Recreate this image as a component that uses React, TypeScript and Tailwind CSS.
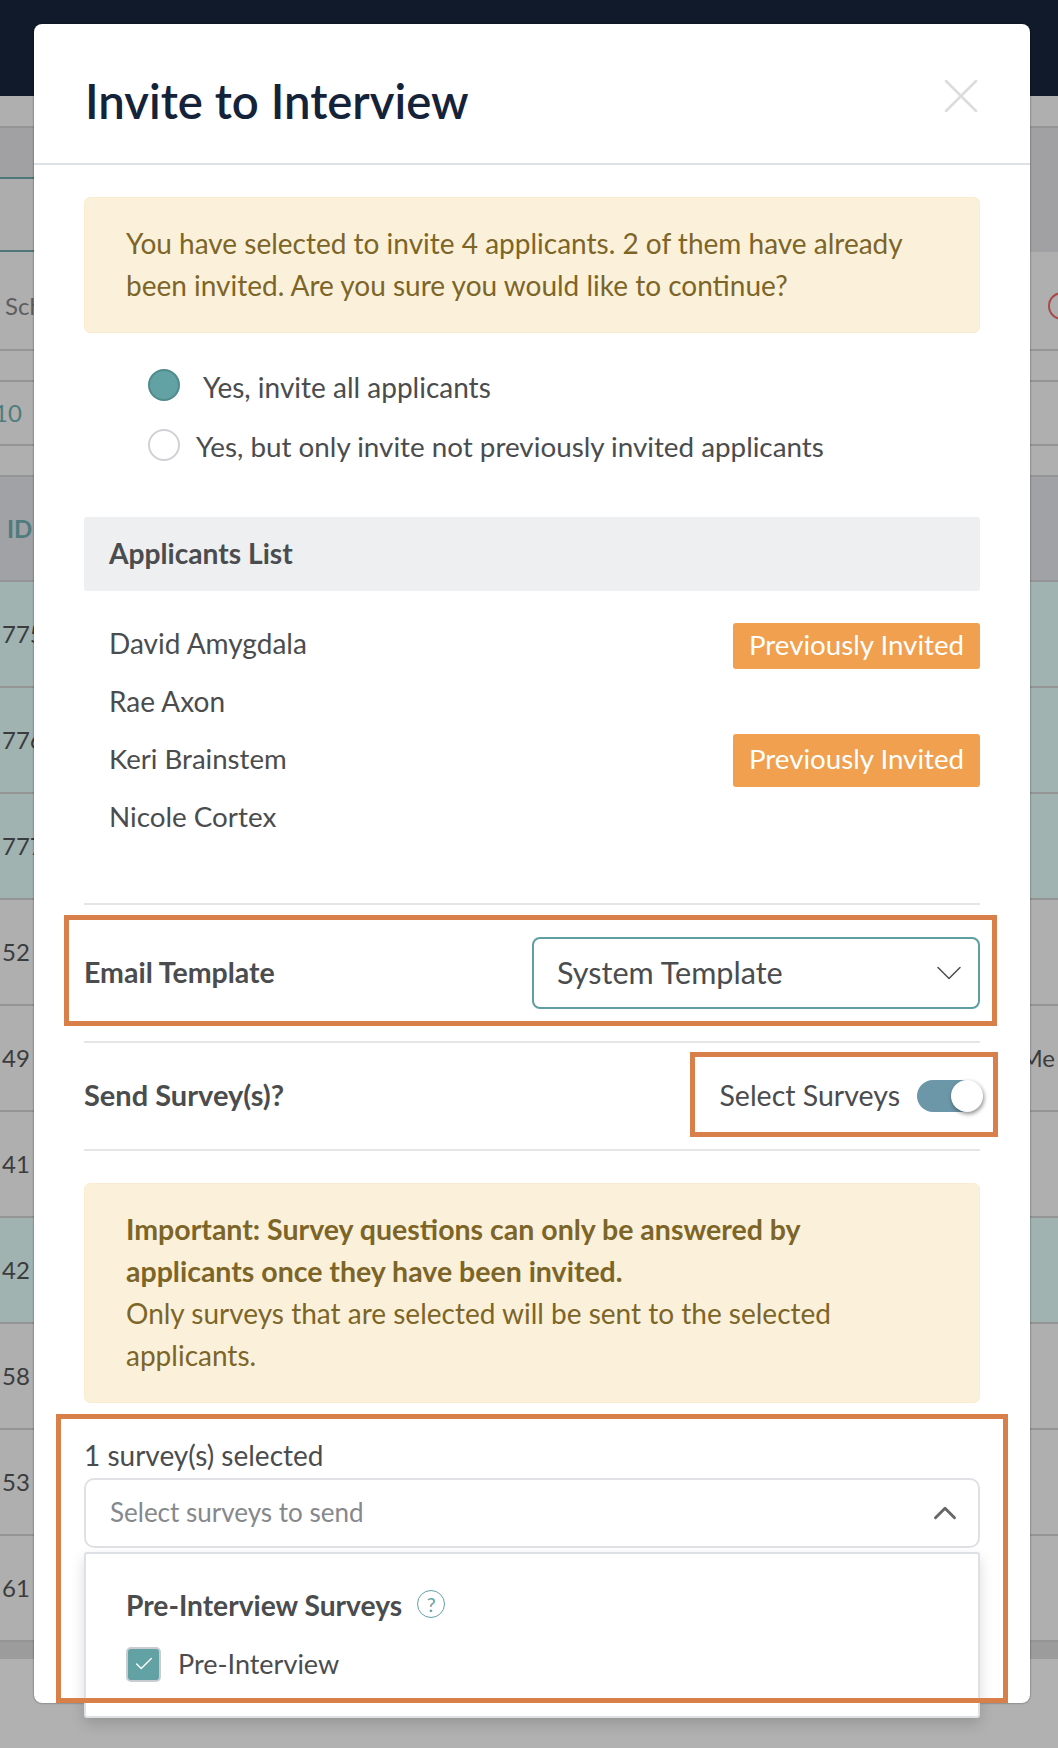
import { X, ChevronDown, ChevronUp, Check } from "lucide-react";

const font = "font-['Lato','Liberation_Sans',sans-serif]";

const rows = [
  { id: "775", teal: true },
  { id: "776", teal: true },
  { id: "777", teal: true },
  { id: "52", teal: false },
  { id: "49", teal: false, right: "Me" },
  { id: "41", teal: false },
  { id: "42", teal: true },
  { id: "58", teal: false },
  { id: "53", teal: false },
  { id: "61", teal: false },
];

function PageBehind() {
  return (
    <div className="text-[24px] text-[#3b3c3d]">
      <div className="h-[96px] bg-[#111a2a]" />
      <div className="h-[30px] bg-[#afafaf]" />
      <div className="h-[51px] border-t-2 border-[#959595] bg-[#a1a1a3]" />
      <div className="flex h-[75px]">
        <div className="w-[34px] border-y-2 border-[#4f7678] bg-[#adadad]" />
        <div className="flex-1 bg-[#a1a1a3]" />
      </div>
      <div className="flex h-[99px] items-center justify-between border-b-2 border-[#959595] bg-[#afafaf] pt-[10px] pl-[5px]">
        <span className="text-[#5d5e5f]">Sch</span>
        <span className="-mr-[18px] h-[28px] w-[28px] rounded-full border-2 border-[#a84a4a]" />
      </div>
      <div className="h-[31px] border-b-2 border-[#959595] bg-[#afafaf]" />
      <div className="flex h-[64px] items-center border-b-2 border-[#959595] bg-[#afafaf]">
        <span className="-ml-[6px] text-[#4f7c7d]">10</span>
      </div>
      <div className="h-[31px] border-b-2 border-[#959595] bg-[#afafaf]" />
      <div className="flex h-[105px] items-center border-b-2 border-[#959595] bg-[#a1a2a5] pl-[7px] font-bold text-[#4f7c7d]">
        ID
      </div>
      {rows.map((row) => (
        <div
          key={row.id}
          className={`flex h-[106px] items-center justify-between border-b-2 border-[#959595] pl-[2px] ${row.teal ? "bg-[#a0b3b1]" : "bg-[#afafaf]"}`}
        >
          <span>{row.id}</span>
          {row.right && <span className="mr-[3px]">{row.right}</span>}
        </div>
      ))}
      <div className="h-[17px] bg-[#9c9c9c]" />
    </div>
  );
}

function Badge({ tall }: { tall?: boolean }) {
  return (
    <span
      className={`flex w-[247px] items-center justify-center rounded-[3px] bg-[#f0a04f] pb-[3px] text-[27.7px] text-white ${tall ? "h-[53px]" : "mt-[4px] h-[46px]"}`}
    >
      Previously Invited
    </span>
  );
}

function Modal() {
  return (
    <div className="absolute top-[24px] left-[34px] h-[1679px] w-[996px] rounded-[8px] bg-white text-[28px] text-[#4a4c4e] shadow-[0_0_2px_rgba(0,0,0,0.6)]">
      <div className="flex h-[141px] items-center justify-between border-b-2 border-[#dde0e4] pr-[39px] pl-[51px]">
        <h1 className="mt-[15px] text-[47.3px] font-semibold text-[#14233a]">Invite to Interview</h1>
        <X className="mt-[4px] h-[60px] w-[60px] text-[#dcdcdc]" strokeWidth={1} />
      </div>

      <div className="px-[50px]">
        <div className="mt-[32px] rounded-[6px] border border-[#faedcf] bg-[#fbf1da] px-[41px] pt-[24px] pb-[26px] leading-[42px] text-[#7d6528]">
          You have selected to invite 4 applicants. 2 of them have already been invited. Are you sure you would like to continue?
        </div>

        <div className="mt-[22px] pl-[64px]">
          <div className="flex h-[60px] items-center gap-[23px]">
            <span className="h-[32px] w-[32px] rounded-full border-2 border-[#4f8a8c] bg-[#62a2a4]" />
            <span className="mt-[4px]">Yes, invite all applicants</span>
          </div>
          <div className="flex h-[60px] items-center gap-[16px]">
            <span className="h-[32px] w-[32px] rounded-full border-2 border-[#cfd1d5] bg-white" />
            <span className="mt-[3px] text-[27.8px]">Yes, but only invite not previously invited applicants</span>
          </div>
        </div>

        <div className="mt-[42px] flex h-[74px] items-center rounded-[3px] bg-[#eeeff1] pb-[2px] pl-[25px] text-[28.2px] font-bold">
          Applicants List
        </div>

        <div className="mt-[24px] pl-[25px]">
          <div className="flex h-[58px] items-center justify-between">
            <span className="-mt-[2px]">David Amygdala</span>
            <Badge />
          </div>
          <div className="flex h-[58px] items-center pb-[2px]">Rae Axon</div>
          <div className="flex h-[58px] items-center justify-between">
            <span className="-mt-[2px] text-[27.6px]">Keri Brainstem</span>
            <Badge tall />
          </div>
          <div className="flex h-[58px] items-center pb-[2px] text-[27.8px]">Nicole Cortex</div>
        </div>

        <div className="mt-[56px] flex h-[140px] items-center justify-between border-y-2 border-[#e5e5e5] text-[28.5px] font-bold">
          <span className="-mt-[2px]">Email Template</span>
          <div className="flex h-[72px] w-[448px] items-center justify-between rounded-[8px] border-2 border-[#5f9fa1] pr-[7px] pl-[23px] text-[30.6px] font-normal">
            System Template
            <ChevronDown className="h-[44px] w-[44px]" strokeWidth={0.8} />
          </div>
        </div>

        <div className="flex h-[106px] items-center justify-between text-[29px] font-bold">
          <span className="-mt-[2px]">Send Survey(s)?</span>
          <div className="flex items-center gap-[17px] text-[28.5px] font-normal">
            <span className="-mt-[2px]">Select Surveys</span>
            <span className="relative h-[32px] w-[63px] rounded-full bg-[#6c97a8]">
              <span className="absolute top-0 right-[-3px] h-[32px] w-[32px] rounded-full bg-white shadow-[1px_2px_4px_rgba(0,0,0,0.45)]" />
            </span>
          </div>
        </div>

        <div className="border-t-2 border-[#e5e5e5] pt-[32px]">
          <div className="rounded-[6px] border border-[#faedcf] bg-[#fbf1da] px-[41px] pt-[24px] pb-[26px] leading-[42px] text-[#7d6528]">
            <p className="text-[28.5px] font-bold">
              Important: Survey questions can only be answered by
              <br />
              applicants once they have been invited.
            </p>
            <p>Only surveys that are selected will be sent to the selected applicants.</p>
          </div>
        </div>

        <div className="mt-[38px] h-[29px] leading-[28px]">1 survey(s) selected</div>
        <div className="mt-[8px] flex h-[70px] items-center justify-between rounded-[10px] border-2 border-[#dfe1e5] pr-[14px] pb-[1px] pl-[24px] text-[26px] text-[#85888c]">
          Select surveys to send
          <ChevronUp className="h-[38px] w-[38px] text-[#666]" strokeWidth={1.8} />
        </div>

        <div className="mt-[4px] h-[166px] rounded-[3px] border-2 border-[#dde0e4] bg-white pt-[37px] pl-[40px] shadow-[0_6px_14px_rgba(0,0,0,0.15)]">
          <div className="flex h-[28px] items-center gap-[15px] text-[28.2px] font-bold">
            Pre-Interview Surveys
            <span className="-mt-[2px] flex h-[28px] w-[28px] items-center justify-center rounded-full border-[1.5px] border-[#62a2a4] text-[20px] font-normal text-[#62a2a4]">
              ?
            </span>
          </div>
          <div className="mt-[25px] flex items-center gap-[17px] text-[27px]">
            <span className="flex h-[35px] w-[35px] items-center justify-center rounded-[5px] border-2 border-[#c9ccd0] bg-[#62a2a4]">
              <Check className="h-[22px] w-[22px] text-white" strokeWidth={1.5} />
            </span>
            Pre-Interview
          </div>
        </div>
      </div>
    </div>
  );
}

export default function App() {
  return (
    <div className={`relative h-[1748px] overflow-hidden bg-[#b1b1b1] ${font}`}>
      <PageBehind />
      <Modal />
      {/* review highlights drawn on top of the modal */}
      <div className="absolute top-[915px] left-[64px] h-[111px] w-[933px] border-[5px] border-[#d97f4a]" />
      <div className="absolute top-[1052px] left-[690px] h-[85px] w-[308px] border-[5px] border-[#d97f4a]" />
      <div className="absolute top-[1414px] left-[56px] h-[289px] w-[952px] border-[5px] border-[#d97f4a]" />
    </div>
  );
}
